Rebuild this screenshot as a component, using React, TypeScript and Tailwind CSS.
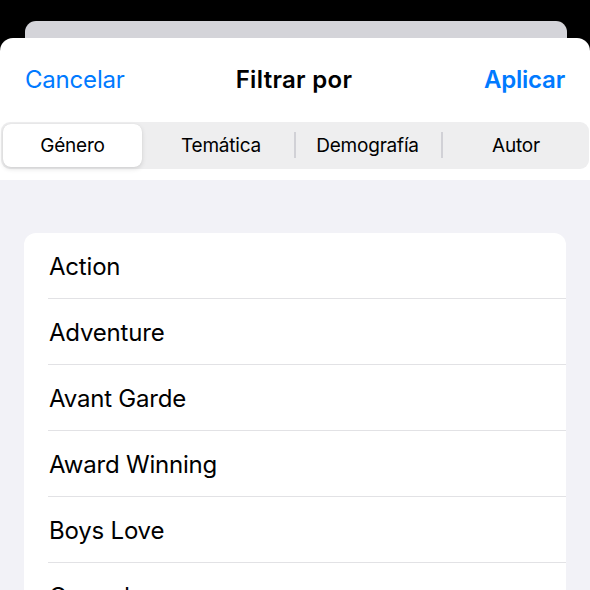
import React from "react";

const items = ["Action", "Adventure", "Avant Garde", "Award Winning", "Boys Love", "Comedy"];

export default function App() {
  return (
    <div
      className="w-[590px] h-[590px] bg-black overflow-hidden flex flex-col"
      style={{ fontFamily: "Inter, 'Noto Sans', sans-serif" }}
    >
      <div className="pt-[21px] px-[25px] h-[38px] shrink-0">
        <div className="h-full w-[542px] bg-[#d4d4d9] rounded-t-[11px]" />
      </div>
      <div className="flex-1 bg-white rounded-t-[13px] flex flex-col overflow-hidden">
        <div className="h-[84px] shrink-0 grid grid-cols-[1fr_auto_1fr] items-center px-[25px]">
          <span className="text-[24px] text-[#007aff] tracking-[-0.2px] justify-self-start">Cancelar</span>
          <span className="text-[24px] font-semibold text-black tracking-[0.3px] pr-[2px]">Filtrar por</span>
          <span className="text-[24px] font-semibold text-[#007aff] tracking-[-0.2px] justify-self-end">Aplicar</span>
        </div>
        <div className="mx-[1px] h-[47px] rounded-[9px] bg-[#eeeeef] p-[2px] grid grid-cols-[139px_6px_146px_147px_1fr] shrink-0">
          <div className="relative flex items-center justify-center">
            <div className="absolute inset-0 bg-white rounded-[8px] shadow-[0_2px_5px_rgba(0,0,0,0.12),0_0_1px_rgba(0,0,0,0.1)]" />
            <span className="relative text-[19px] text-black tracking-[-0.2px] pt-[2px]">Género</span>
          </div>
          <div />
          <div className="relative flex items-center justify-center">
            <span className="relative text-[19px] text-black tracking-[-0.2px] pt-[2px]">Temática</span>
          </div>
          <div className="relative flex items-center justify-center">
            <div className="absolute left-0 top-[8px] bottom-[9px] w-[1.5px] bg-[#d1d1d6]" />
            <span className="relative text-[19px] text-black tracking-[-0.2px] pt-[2px]">Demografía</span>
          </div>
          <div className="relative flex items-center justify-center">
            <div className="absolute left-0 top-[8px] bottom-[9px] w-[1.5px] bg-[#d1d1d6]" />
            <span className="relative text-[19px] text-black tracking-[-0.2px] pl-[4px] pt-[2px]">Autor</span>
          </div>
        </div>
        <div className="h-[11px] shrink-0" />
        <div className="flex-1 bg-[#f2f2f7] pt-[53px] px-[24px]">
          <div className="bg-white rounded-[12px]">
            {items.map((it) => (
              <div key={it} className="pl-[24px]">
                <div className="h-[66px] flex items-center border-b border-[#e2e2e5]">
                  <span className="text-[24px] text-black pl-[1px] pt-[2px] tracking-[-0.2px]">{it}</span>
                </div>
              </div>
            ))}
          </div>
        </div>
      </div>
    </div>
  );
}
